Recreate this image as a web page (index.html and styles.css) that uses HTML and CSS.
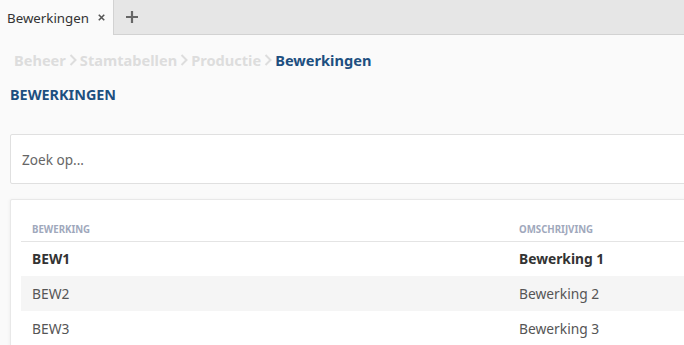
FILE: index.html
```html
<html>
    <head>
        <link rel="stylesheet" href="styles.css">
    </head>
    <body>
        <div class="tabbar">
            <div class="tab active">
                <span>Bewerkingen</span>
                <svg class="tab-close" width="9" height="9" viewBox="0 0 9 9">
                    <path d="M1 1l7 7M8 1l-7 7" stroke="#555" stroke-width="2"/>
                </svg>
            </div>
            <div class="tab-add">
                <svg width="12" height="12" viewBox="0 0 12 12">
                    <path d="M6 0v12M0 6h12" stroke="#666" stroke-width="2.2"/>
                </svg>
            </div>
        </div>
        <div class="page">
            <div class="crumbs">
                <span class="crumb">Beheer</span>
                <svg class="sep" width="8" height="12" viewBox="0 0 8 12"><path d="M1.5 1l5 5-5 5" fill="none" stroke="#ddd" stroke-width="2"/></svg>
                <span class="crumb">Stamtabellen</span>
                <svg class="sep" width="8" height="12" viewBox="0 0 8 12"><path d="M1.5 1l5 5-5 5" fill="none" stroke="#ddd" stroke-width="2"/></svg>
                <span class="crumb">Productie</span>
                <svg class="sep" width="8" height="12" viewBox="0 0 8 12"><path d="M1.5 1l5 5-5 5" fill="none" stroke="#ddd" stroke-width="2"/></svg>
                <span class="crumb current">Bewerkingen</span>
            </div>
            <h1 class="title">BEWERKINGEN</h1>
            <div class="search">
                <input type="text" placeholder="Zoek op...">
            </div>
            <div class="card">
                <table>
                    <thead>
                        <tr><th class="c1">BEWERKING</th><th>OMSCHRIJVING</th></tr>
                    </thead>
                    <tbody>
                        <tr class="selected"><td>BEW1</td><td>Bewerking 1</td></tr>
                        <tr class="alt"><td>BEW2</td><td>Bewerking 2</td></tr>
                        <tr><td>BEW3</td><td>Bewerking 3</td></tr>
                    </tbody>
                </table>
            </div>
        </div>
    </body>
</html>
```

FILE: styles.css
```css
* {
    box-sizing: border-box;
}
body {
    margin: 0;
    background: #fafafa;
    font-family: "Noto Sans", sans-serif;
    color: #444;
    overflow: hidden;
}
.tabbar {
    display: flex;
    height: 35px;
    background: #e6e6e6;
    border-bottom: 1px solid #d2d2d2;
}
.tab {
    display: flex;
    align-items: center;
    gap: 9px;
    padding: 0 8px 0 7px;
    font-size: 13.3px;
    color: #333;
}
.tab.active {
    background: #fafafa;
    width: 114px;
    height: 35px;
    border-right: 1px solid #d2d2d2;
}
.tab-add {
    display: flex;
    align-items: center;
    justify-content: center;
    width: 36px;
}
.page {
    padding: 0 0 0 10px;
}
.crumbs {
    display: flex;
    align-items: center;
    gap: 3px;
    height: 50px;
    padding: 0 4px;
    font-size: 14.6px;
    font-weight: bold;
}
.crumb {
    color: #ddd;
}
.crumb.current {
    color: #1d4f80;
}
.title {
    margin: 0;
    font-size: 14.4px;
    font-weight: bold;
    color: #1d4f80;
    height: 49px;
    line-height: 20px;
}
.search {
    background: #fff;
    border: 1px solid #e0e0e0;
    border-radius: 2px;
    height: 50px;
    margin-right: -10px;
    display: flex;
    align-items: center;
}
.search input {
    border: none;
    outline: none;
    background: transparent;
    font-family: inherit;
    font-size: 13.6px;
    padding: 0 11px;
    width: 100%;
}
.search input::placeholder {
    color: #666;
}
.card {
    margin-top: 15px;
    margin-right: -10px;
    background: #fff;
    border: 1px solid #e8e8e8;
    border-radius: 2px;
    box-shadow: -1px 0 3px rgba(0, 0, 0, 0.04);
    padding: 18px 0 0 10px;
}
table {
    width: 100%;
    border-collapse: collapse;
}
th {
    text-align: left;
    font-size: 9.7px;
    font-weight: bold;
    color: #a0a8bc;
    height: 23px;
    padding: 0 11px;
    border-bottom: 1px solid #e4e4e4;
}
th.c1 {
    width: 487px;
}
td {
    height: 35px;
    padding: 0 11px;
    font-size: 13.8px;
    color: #555;
}
tr.selected td {
    font-weight: bold;
    color: #333;
}
tr.alt td {
    background: #f5f5f5;
}
```
